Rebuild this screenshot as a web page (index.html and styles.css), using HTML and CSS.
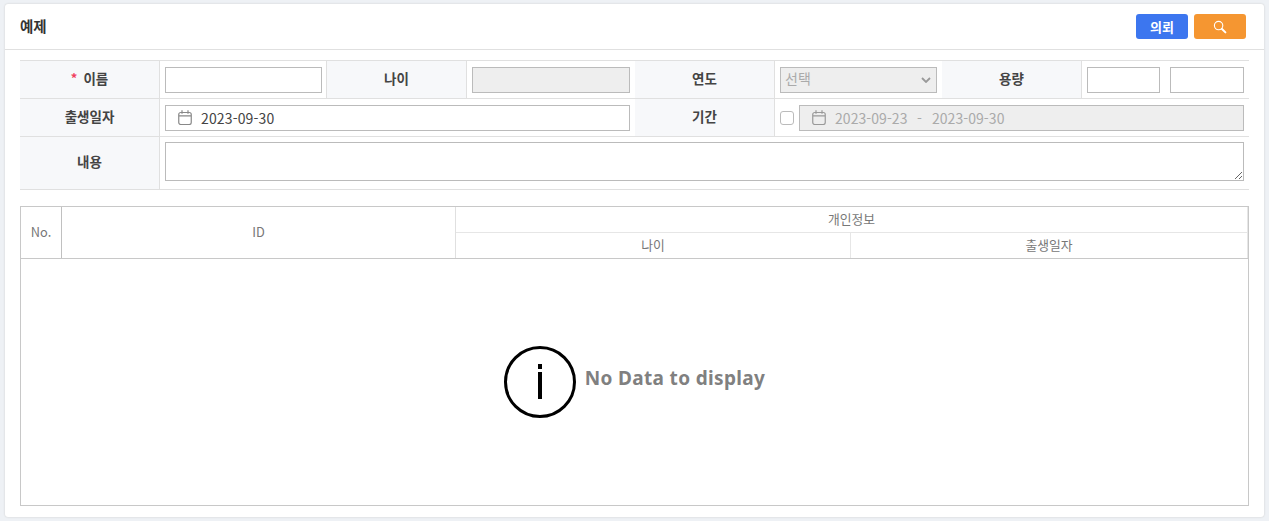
FILE: index.html
```html
<!DOCTYPE html>
<html lang="ko">
<head>
<meta charset="utf-8">
<title>예제</title>
<link rel="stylesheet" href="styles.css">
</head>
<body>
<main class="card">
  <header class="card-head">
    <h1 class="title">예제</h1>
    <div class="actions">
      <button class="btn btn-blue" type="button">의뢰</button>
      <button class="btn btn-orange" type="button" aria-label="검색">
        <svg width="14" height="14" viewBox="0 0 14 14" fill="none"><circle cx="5.6" cy="5.6" r="4.2" stroke="#fff" stroke-width="1.1"/><path d="M9 9l3.4 3.4" stroke="#fff" stroke-width="2" stroke-linecap="round"/></svg>
      </button>
    </div>
  </header>
  <div class="card-body">
    <form class="form-grid">
      <div class="lbl r1"><span class="req">*</span>이름</div>
      <div class="cell r1 line-r"><input class="field" type="text"></div>
      <div class="lbl r1">나이</div>
      <div class="cell r1"><input class="field off" type="text" disabled></div>
      <div class="lbl r1">연도</div>
      <div class="cell r1"><div class="field sel off"><span>선택</span>
        <svg width="10" height="6" viewBox="0 0 10 6" fill="none"><path d="M1 1l4 4 4-4" stroke="#999" stroke-width="1.8"/></svg></div></div>
      <div class="lbl r1">용량</div>
      <div class="cell r1 pair"><input class="field" type="text"><input class="field" type="text"></div>

      <div class="lbl r2">출생일자</div>
      <div class="cell r2 span3"><div class="field date">
        <svg class="cal" width="14" height="15" viewBox="0 0 14 15" fill="none"><rect x=".75" y="2.5" width="12.5" height="12" rx="2" stroke="#888" stroke-width="1.2"/><path d="M1 5.8h12M4 .3v3.4M10 .3v3.4" stroke="#888" stroke-width="1.2"/></svg>
        <span>2023-09-30</span></div></div>
      <div class="lbl r2">기간</div>
      <div class="cell r2 span3 period"><span class="check"></span><div class="field date off">
        <svg class="cal" width="14" height="15" viewBox="0 0 14 15" fill="none"><rect x=".75" y="2.5" width="12.5" height="12" rx="2" stroke="#999" stroke-width="1.2"/><path d="M1 5.8h12M4 .3v3.4M10 .3v3.4" stroke="#999" stroke-width="1.2"/></svg>
        <span>2023-09-23</span><span class="dash">-</span><span>2023-09-30</span></div></div>

      <div class="lbl r3">내용</div>
      <div class="cell r3 span7"><textarea class="field area"></textarea></div>
    </form>

    <section class="grid-box">
      <div class="grid-head">
        <div class="gh no">No.</div>
        <div class="gh id">ID</div>
        <div class="gh group">개인정보</div>
        <div class="gh age">나이</div>
        <div class="gh birth">출생일자</div>
      </div>
      <div class="grid-empty">
        <svg width="72" height="72" viewBox="0 0 72 72" fill="none"><circle cx="36" cy="36" r="34.5" stroke="#000" stroke-width="3"/><rect x="34" y="18" width="4" height="5" fill="#000"/><rect x="34" y="26" width="4" height="27" fill="#000"/></svg>
        <span class="empty-text">No Data to display</span>
      </div>
    </section>
  </div>
</main>
</body>
</html>
```

FILE: styles.css
```css
* { box-sizing: border-box; }
html, body { height: 100%; }
body {
  margin: 0;
  padding: 4px 5px;
  background: #eef1f5;
  font-family: "Noto Sans CJK KR", "Noto Sans", sans-serif;
  font-size: 13px;
  color: #444;
}
.card {
  height: 513px;
  background: #fff;
  border-radius: 3px;
  box-shadow: 0 0 2px #c8c8c8;
}
.card-head {
  height: 46px;
  display: flex;
  align-items: center;
  justify-content: space-between;
  padding: 0 18px 0 15px;
  border-bottom: 1px solid #e0e0e0;
}
.title { margin: 0 0 3px; font-size: 14.5px; font-weight: 700; color: #333; }
.actions { display: flex; gap: 6px; }
.btn {
  width: 52px;
  height: 25px;
  border: 0;
  border-radius: 3px;
  padding: 0;
  display: flex;
  align-items: center;
  justify-content: center;
  font: 700 13px "Noto Sans CJK KR", sans-serif;
  color: #fff;
}
.btn-blue { background: #3c76ef; }
.btn-orange { background: #f59631; }
.card-body { padding: 10px 15px 0; }

.form-grid {
  width: 1229px;
  display: grid;
  grid-template-columns: 140px 167px 140px 168px 140px 167px 140px 167px;
  grid-template-rows: 38px 38px 53px;
  border-top: 1px solid #e0e0e0;
}
.lbl {
  display: flex;
  align-items: center;
  justify-content: center;
  background: #f7f8fa;
  border-right: 1px solid #e0e0e0;
  border-bottom: 1px solid #e0e0e0;
  font-size: 13.5px;
  font-weight: 700;
  color: #444;
  padding-bottom: 4px;
}
.lbl.r3 { padding-bottom: 5px; }
.req { color: #f0405f; margin-right: 6px; font-size: 13px; }
.cell {
  display: flex;
  align-items: center;
  padding: 0 5px;
  border-bottom: 1px solid #e0e0e0;
}
.line-r { padding-right: 4px; border-right: 1px solid #e0e0e0; }
.r3.cell { padding-bottom: 3px; }
.span3 { grid-column: span 3; }
.span7 { grid-column: span 7; }
.field {
  display: block;
  width: 100%;
  height: 26px;
  border: 1px solid #bbb;
  background: #fff;
  margin: 0;
  padding: 0 5px;
  border-radius: 0;
  font: 14px "Noto Sans CJK KR", sans-serif;
  color: #444;
}
.off { background: #eee; color: #aaa; }
.sel { display: flex; align-items: center; justify-content: space-between; padding: 0 5px 0 4px; }
.sel span { margin-bottom: 3px; }
.pair { gap: 10px; }
.pair .field:first-child { width: 73px; }
.pair .field:last-child { width: 74px; }
.date { display: flex; align-items: center; padding: 0 0 0 12px; letter-spacing: .15px; }
.date.off { letter-spacing: .06px; }
.cal { margin-right: 9px; flex: none; }
.dash { margin: 0 10px 0 9.5px; }
.period { gap: 5px; }
.check {
  flex: none;
  width: 14px;
  height: 14px;
  border: 1px solid #bbb;
  border-radius: 3px;
  background: #fff;
}
.area { height: 39px; resize: vertical; }

.grid-box {
  width: 1229px;
  height: 300px;
  margin-top: 16px;
  border: 1px solid #c8c8c8;
  display: flex;
  flex-direction: column;
}
.grid-head {
  flex: none;
  border-bottom: 1px solid #c8c8c8;
  display: grid;
  grid-template-columns: 41px 394px 395px 397px;
  grid-template-rows: 26px 25px;
  font-size: 12.8px;
  color: #777;
}
.gh { display: flex; align-items: center; justify-content: center; padding-bottom: 2px; }
.no { grid-row: span 2; border-right: 1px solid #c0c0c0; }
.id { grid-row: span 2; border-right: 1px solid #e0e0e0; }
.group { grid-column: 3 / span 2; border-bottom: 1px solid #e6e6e6; border-right: 1px solid #e6e6e6; }
.age { border-right: 1px solid #e6e6e6; }
.birth { border-right: 1px solid #e6e6e6; }
.grid-empty {
  flex: 1;
  display: flex;
  align-items: center;
  justify-content: center;
  gap: 9px;
}
.empty-text {
  font-family: "Noto Sans", sans-serif;
  font-size: 19px;
  font-weight: 700;
  letter-spacing: .34px;
  color: #808080;
  margin-bottom: 8px;
}
```
